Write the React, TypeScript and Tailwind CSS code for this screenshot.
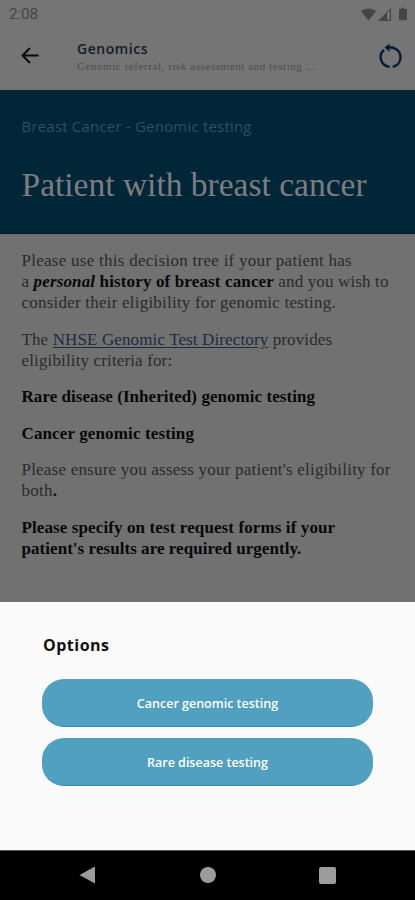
import type { ReactNode } from "react";

function StatusBar() {
  return (
    <div className="flex h-7 items-center justify-between pl-[9px] pr-2 text-[#454545]">
      <span className="font-[Roboto,sans-serif] text-[15.5px] leading-7 tracking-[-0.2px]">2:08</span>
      <div className="flex items-center">
        <svg width="15" height="13" viewBox="0 0 16 13" fill="currentColor" className="mr-[2px]">
          <path d="M0 3.2C4.6-.9 11.4-.9 16 3.2L8 13z" />
        </svg>
        <svg width="13" height="13" viewBox="0 0 13 13" fill="currentColor" className="mr-2">
          <path fillRule="evenodd" d="M13 0v13H0zM9 5.2v6.6h2.8V2.4z" />
        </svg>
        <svg width="8" height="14" viewBox="0 0 9 14" fill="currentColor">
          <path d="M3 0h3v1.5h2a1 1 0 0 1 1 1V13a1 1 0 0 1-1 1H1a1 1 0 0 1-1-1V2.5a1 1 0 0 1 1-1h2z" />
        </svg>
      </div>
    </div>
  );
}

function AppBar() {
  return (
    <header className="flex h-[62px] items-start pl-[21px] pr-[13px]">
      <svg width="19" height="17" viewBox="0 0 19 17" fill="none" stroke="#0b0b0b" strokeWidth="2" className="mt-[19px]">
        <path d="M17.5 8.5H2M9 1L1.5 8.5 9 16" />
      </svg>
      <div className="ml-[37px] mt-[11px] flex-1 whitespace-nowrap">
        <h1 className="font-['Open_Sans',sans-serif] text-[14px] font-semibold leading-5 tracking-[0.55px] text-[#101c28]">
          Genomics
        </h1>
        <p className="font-['Liberation_Serif',serif] text-[11px] leading-[14px] tracking-[0.57px] text-[#4b4b4b]">
          Genomic referral, risk assessment and testing ...
        </p>
      </div>
      <svg width="23" height="26" viewBox="0 0 23 26" fill="none" stroke="#071b36" strokeWidth="2.4" className="mt-[15px]">
        <path d="M7 4.6C16 3 21.500 8 21.500 14.300C21.500 19.500 18 23 13.800 23.700M10.500 23.700A9.600 9.600 0 0 1 5 6.900" />
        <path d="M10.500 .5v8.200L5.500 4.600z" fill="#071b36" stroke="none" />
      </svg>
    </header>
  );
}

function Line({ className = "", children }: { className?: string; children: ReactNode }) {
  return <span className={`block whitespace-nowrap ${className}`}>{children}</span>;
}

function Article() {
  return (
    <main className="flex h-[368px] flex-col gap-[15.5px] bg-[#717171] pl-[21.5px] pt-4 font-['Liberation_Serif',serif] text-[17px] leading-[21px] text-[#2a2a2a] [&_strong]:text-[#080808]">
      <p>
        <Line className="tracking-[0.27px]">Please use this decision tree if your patient has</Line>
        <Line className="tracking-[0.14px]">
          a <strong><em>personal</em> history of breast cancer</strong> and you wish to
        </Line>
        <Line className="tracking-[0.22px]">consider their eligibility for genomic testing.</Line>
      </p>
      <p>
        <Line className="tracking-[0.12px]">
          The <a className="text-[#1c2c3e] underline underline-offset-2">NHSE Genomic Test Directory</a> provides
        </Line>
        <Line className="tracking-[0.14px]">eligibility criteria for:</Line>
      </p>
      <p className="tracking-[0.05px]">
        <strong>Rare disease (Inherited) genomic testing</strong>
      </p>
      <p className="tracking-[0.13px]">
        <strong>Cancer genomic testing</strong>
      </p>
      <p>
        <Line className="tracking-[0.21px]">Please ensure you assess your patient's eligibility for</Line>
        <Line className="tracking-[0.27px]">
          both<strong>.</strong>
        </Line>
      </p>
      <p>
        <strong>
          <Line className="tracking-[0.11px]">Please specify on test request forms if your</Line>
          <Line className="tracking-[0.05px]">patient's results are required urgently.</Line>
        </strong>
      </p>
    </main>
  );
}

const options = ["Cancer genomic testing", "Rare disease testing"];

function OptionsSheet() {
  return (
    <section className="h-[248px] bg-[#fafafa] px-[42px] pt-[31px] font-['Open_Sans',sans-serif]">
      <h3 className="pl-px text-[16px] font-bold leading-6 tracking-[0.5px] text-[#111]">Options</h3>
      <div className="mt-[22px] flex flex-col gap-[11px]">
        {options.map((label) => (
          <button
            key={label}
            className="h-12 rounded-[22px] border-b border-[#2d8fb3] bg-[#51a0c0] pt-1 text-[12.5px] font-semibold text-white"
          >
            {label}
          </button>
        ))}
      </div>
    </section>
  );
}

function NavBar() {
  return (
    <nav className="flex h-[50px] items-center justify-between border-t border-[#555] bg-black pb-px pl-[79px] pr-[79px] text-[#9c9c9c]">
      <svg width="17" height="18" viewBox="0 0 17 18" fill="currentColor">
        <path d="M16 .5v17L.5 9z" />
      </svg>
      <span className="size-4 rounded-full bg-[#9c9c9c]" />
      <span className="size-[17px] rounded-[2px] bg-[#9c9c9c]" />
    </nav>
  );
}

export default function App() {
  return (
    <div className="flex h-[900px] w-[415px] flex-col overflow-hidden bg-[#757575]">
      <StatusBar />
      <AppBar />
      <section className="h-[144px] border-b border-[#01182a] bg-[#012637] pl-[21.5px] pt-[25px]">
        <p className="font-['Open_Sans',sans-serif] text-[15px] leading-[22px] tracking-[0.2px] text-[#2b5261]">
          Breast Cancer - Genomic testing
        </p>
        <h2 className="mt-7 whitespace-nowrap font-['Liberation_Serif',serif] text-[33.5px] leading-10 text-[#7d7d80]">
          Patient with breast cancer
        </h2>
      </section>
      <Article />
      <OptionsSheet />
      <NavBar />
    </div>
  );
}
